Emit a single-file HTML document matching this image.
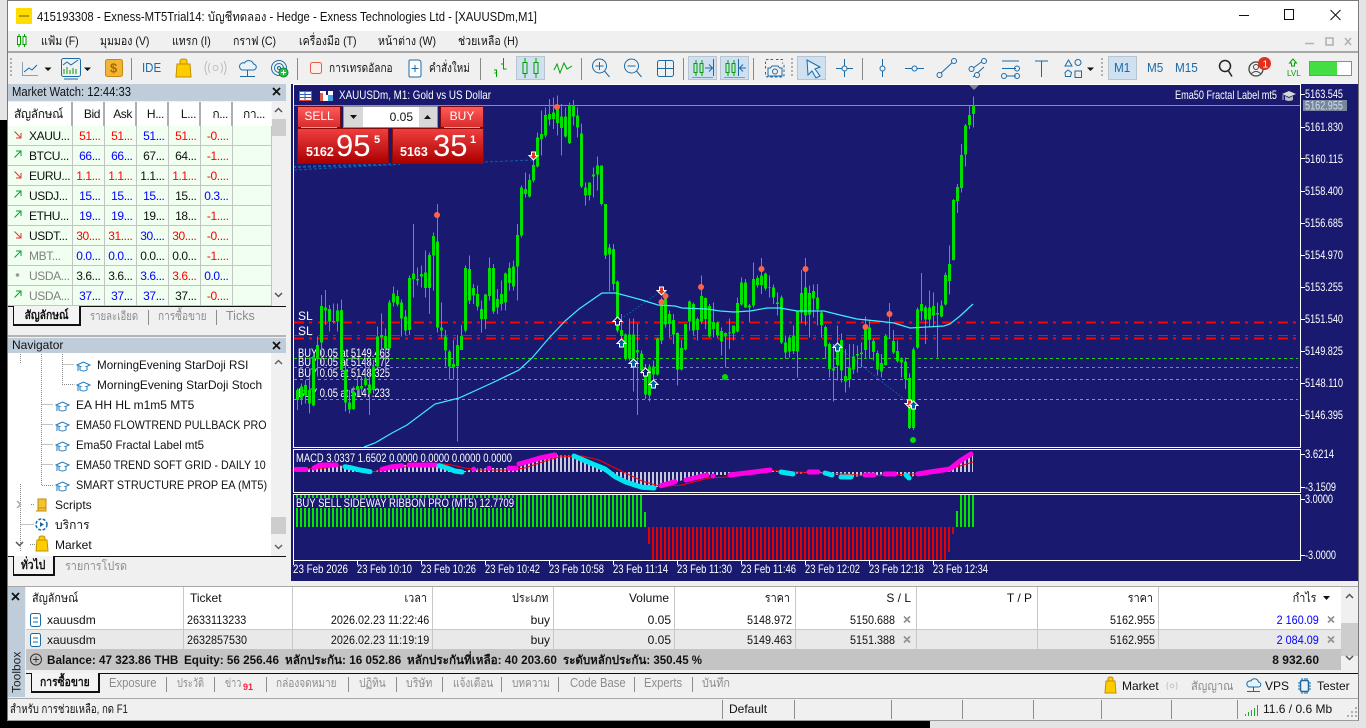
<!DOCTYPE html>
<html lang="th"><head><meta charset="utf-8"><title>XAUUSDm,M1</title>
<style>
html,body{margin:0;padding:0;width:1366px;height:728px;overflow:hidden;background:#e4e4e4}
body{position:relative;font:12px/16px "Liberation Sans","Noto Sans CJK SC","DejaVu Sans",sans-serif;color:#111}
.a,.t,svg.p{position:absolute}
.t{white-space:nowrap;line-height:16px;height:16px;transform-origin:0 0}
.g{color:#8c8c8c}.sb{font-weight:bold}
.x9{transform:scaleX(.9)}.x8{transform:scaleX(.84)}.x88{transform:scaleX(.88)}.x97{transform:scaleX(.975)}
.rr{transform:scaleX(.9);transform-origin:100% 0}
.v{position:absolute;width:1px;background:#c8c8c8}
.s{position:absolute;width:1px;background:#8c8c8c}
.hl{position:absolute;height:1px;background:#c8c8c8}
table.mw{position:absolute;left:8px;top:102px;border-collapse:collapse;table-layout:fixed;width:263px;background:#f0fff0}
table.mw td,table.mw th{border-right:1px solid #c4c4c4;border-bottom:1px solid #c4c4c4;padding:0 3px 0 0;text-align:right;height:19px;font-weight:normal;overflow:hidden;white-space:nowrap;font-size:12px;line-height:16px;letter-spacing:-.4px}
table.mw th{background:#fff;height:23px;border-bottom:1px solid #fff;border-right:2px solid #b0b0b0}
table.mw td.n{text-align:left;padding-left:21px;border-right:1px solid #c4c4c4}
.r{color:#f00}.b{color:#00f}.k{color:#111}.y{color:#808080!important}
.panel-r{background:linear-gradient(#ef3f3f,#ab0000);position:absolute;color:#fff}
.tab{position:absolute;background:#f4f4f4;border:2px solid #111;border-top:0;border-left-width:1px;box-sizing:border-box;text-align:center;font-weight:bold}
.tab span{display:inline-block;transform:scaleX(.86)}
</style></head><body>
<div class="a" style="left:0;top:120px;width:8px;height:608px;background:#000"></div>
<div class="a" style="left:0;top:720px;width:930px;height:8px;background:#000"></div>

<div class="a" style="left:7px;top:0;width:1352px;height:721px;background:#f0f0f0;box-sizing:border-box;border:1px solid #7a7a7a;border-bottom-color:#9a9a9a"></div>
<div class="a" style="left:8px;top:1px;width:1350px;height:30px;background:#fff"></div>
<div class="a" style="left:16px;top:8px;width:16px;height:16px;background:#ffdd00"></div>
<div class="a" style="left:19px;top:15px;width:10px;height:2px;background:#b09a10"></div>
<span class="t" style="left:37px;top:9px;font-size:12.500px;transform:scaleX(.906)">415193308 - Exness-MT5Trial14: บัญชีทดลอง - Hedge - Exness Technologies Ltd - [XAUUSDm,M1]</span>

<div class="a" style="left:8px;top:51px;width:1350px;height:2px;background:#a8a8a8"></div>
<span class="t x88" style="left:41px;top:33px">แฟ้ม (F)</span>
<span class="t x88" style="left:100px;top:33px">มุมมอง (V)</span>
<span class="t x88" style="left:172px;top:33px">แทรก (I)</span>
<span class="t x88" style="left:233px;top:33px">กราฟ (C)</span>
<span class="t x88" style="left:299px;top:33px">เครื่องมือ (T)</span>
<span class="t x88" style="left:378px;top:33px">หน้าต่าง (W)</span>
<span class="t x88" style="left:458px;top:33px">ช่วยเหลือ (H)</span>

<!-- selected toolbar backgrounds -->
<div class="a" style="left:516px;top:56px;width:29px;height:24px;background:#cfe0f0;border:1px solid #b8c4d0;box-sizing:border-box"></div>
<div class="a" style="left:688px;top:56px;width:29px;height:24px;background:#cfe0f0;border:1px solid #b8c4d0;box-sizing:border-box"></div>
<div class="a" style="left:720px;top:56px;width:29px;height:24px;background:#cfe0f0;border:1px solid #b8c4d0;box-sizing:border-box"></div>
<div class="a" style="left:797px;top:56px;width:29px;height:24px;background:#cfe0f0;border:1px solid #b8c4d0;box-sizing:border-box"></div>
<div class="a" style="left:1108px;top:56px;width:29px;height:24px;background:#cfe0f0;border:1px solid #b8c4d0;box-sizing:border-box"></div>

<span class="t" style="left:142px;top:60px;font-size:13px;color:#1a6aa8;transform:scaleX(.88)">IDE</span>
<span class="t" style="left:329px;top:60px;transform:scaleX(.84)">การเทรดอัลกอ</span>
<span class="t" style="left:429px;top:60px;transform:scaleX(.82)">คำสั่งใหม่</span>
<span class="t x9" style="left:1114px;top:60px;font-size:13px;color:#1a6aa8">M1</span>
<span class="t x9" style="left:1147px;top:60px;font-size:13px;color:#1a6aa8">M5</span>
<span class="t x9" style="left:1175px;top:60px;font-size:13px;color:#1a6aa8">M15</span>

<!-- toolbar icons -->
<svg class="p" style="left:0;top:0" width="1366" height="84" fill="none">
<g stroke="#00a000" stroke-width="1"><path d="M19 34v13M24.500 34v13"/><rect x="17.500" y="36.500" width="3" height="8" fill="#fff"/><rect x="23" y="36.500" width="3" height="8" fill="#fff"/></g>
<g stroke="#111"><path d="M1239 15.500h10"/><rect x="1284.500" y="9.500" width="9" height="10"/><path d="M1330.500 10l10 10M1340.500 10l-10 10"/></g>
<g stroke="#b0b0b0" stroke-width="1.500"><path d="M1305 43.500h9"/><rect x="1326" y="38" width="7" height="7"/><path d="M1345 38l6 7M1351 38l-6 7"/></g>
<g fill="#b0b0b0"><rect x="10" y="58" width="2" height="2"/><rect x="10" y="62" width="2" height="2"/><rect x="10" y="66" width="2" height="2"/><rect x="10" y="70" width="2" height="2"/><rect x="10" y="74" width="2" height="2"/><rect x="791" y="58" width="2" height="2"/><rect x="791" y="62" width="2" height="2"/><rect x="791" y="66" width="2" height="2"/><rect x="791" y="70" width="2" height="2"/><rect x="791" y="74" width="2" height="2"/><rect x="1101" y="58" width="2" height="2"/><rect x="1101" y="62" width="2" height="2"/><rect x="1101" y="66" width="2" height="2"/><rect x="1101" y="70" width="2" height="2"/><rect x="1101" y="74" width="2" height="2"/></g>
<g stroke="#8a8a8a"><path d="M131.500 58v22M297.500 58v22M480.500 58v22M581.500 58v22M683.500 58v22M753.500 58v22M862.500 58v22"/></g>
<path d="M22.500 62v13.500H38" stroke="#8aa0b4"/><path d="M24 72l5-4 3 2 5-5" stroke="#1a6aa8"/>
<path d="M44.500 67.500h7l-3.500 3.500zM84 67.500h7l-3.500 3.500zM1087 67.500h7l-3.500 3.500z" fill="#111"/>
<rect x="61.500" y="58.500" width="19" height="18" rx="2" stroke="#1a6aa8"/><path d="M63 65l4-3 4 3 7-5" stroke="#1a6aa8"/><path d="M64 74v-5M67 74v-7M70 74v-4M73 74v-6M76 74v-5" stroke="#00a000"/><path d="M64 79h14" stroke="#1a6aa8"/>
<rect x="105.500" y="59.500" width="17" height="17" rx="2" fill="#f2b431" stroke="#c68a12"/><text x="110" y="72.500" font-family="Liberation Sans" font-size="13" font-weight="bold" fill="#a86a00">$</text>
<path d="M177 64h13l1 13h-15zM180 64v-3q0-2 3.500-2t3.500 2v3" fill="#ffcc00" stroke="#c09000"/><path d="M180 61v3M187 61v3" stroke="#c09000"/>
<g stroke="#bdbdbd"><circle cx="215.500" cy="68" r="2.500"/><path d="M210 63q-3 5 0 10M221 63q3 5 0 10M207 61q-4 7 0 14M224 61q4 7 0 14"/></g>
<g stroke="#1a6aa8"><path d="M242 70h11a3 3 0 0 0 .5-6 5 5 0 0 0-9-1 3.500 3.500 0 0 0-2.500 7z" fill="#e8f2fa"/><path d="M247.500 70v6M240 76.500h15"/></g>
<g stroke="#1a6aa8"><circle cx="279" cy="68" r="7.500"/><circle cx="279" cy="68" r="4.500"/><circle cx="279" cy="68" r="1.500"/></g><circle cx="283.500" cy="72.500" r="4.500" fill="#2fbf4f" stroke="#0a8a2a"/><path d="M283.500 70v5M281 72.500h5" stroke="#fff"/>
<rect x="310.500" y="62.500" width="11" height="11" rx="2" fill="#fdeeea" stroke="#e2604a"/>
<path d="M410 60h8q3 0 3 3v12q0 2-2 2h-9q-1 0-1-1v-15q0-1 1-1z" stroke="#1a6aa8" fill="#fff"/><path d="M415 65v7M411.500 68.500h7" stroke="#1a6aa8"/>
<g stroke="#00a000"><path d="M494 70h2.500v7M494.500 73h2M503.500 58v11h3M501 64h2.500"/></g>
<g stroke="#00a000"><path d="M525 58v20M536 58v20"/><rect x="523" y="62.500" width="4" height="11" fill="#cfe0f0"/><rect x="534" y="62.500" width="4" height="11" fill="#cfe0f0"/></g>
<path d="M554 70l3-6 3 9 4-10 3 6 5-3" stroke="#00a000"/>
<g stroke="#1a6aa8"><circle cx="599.500" cy="66" r="7"/><path d="M604.500 71l5 6M599.500 62v8M595.500 66h8"/><circle cx="631.500" cy="66" r="7"/><path d="M636.500 71l5 6M627.500 66h8"/><rect x="657.500" y="60.500" width="16" height="16" rx="2"/><path d="M665.500 60v17M657 68.500h17"/></g>
<g stroke="#00a000"><path d="M696 60v16M702 60v16"/><rect x="694" y="63.500" width="3" height="9" fill="#cfe0f0"/><rect x="700" y="63.500" width="3" height="9" fill="#cfe0f0"/></g><path d="M713.500 59v17M705 68h7M709 64.500l3.500 3.500-3.500 3.500" stroke="#1a6aa8"/><path d="M692 77.500h21M724 77.500h21" stroke="#8a9aa8"/>
<g stroke="#00a000"><path d="M728 60v16M734 60v16"/><rect x="726" y="63.500" width="3" height="9" fill="#cfe0f0"/><rect x="732" y="63.500" width="3" height="9" fill="#cfe0f0"/></g><path d="M738.500 59v17M746 68h-6M743 64.500l-3.500 3.500 3.500 3.500" stroke="#1a6aa8"/>
<path d="M773 59.500h-6q-1.500 0-1.500 1.500v3M765.500 66v3M765.500 72v3q0 2 2 2h15q1.500 0 1.500-2v-10q0-2-2-2M776 59.500h7" stroke="#1a6aa8" stroke-dasharray="2.500 2"/><path d="M772 66h6l1.500 2h2.500v8h-14v-8h2.500z" stroke="#1a6aa8"/><circle cx="775" cy="71.500" r="2.500" stroke="#1a6aa8"/>
<path d="M807 60l13 7-5 2 5 7-4 2-4-7-4 4z" stroke="#1a6aa8" fill="#e4eff8"/>
<g stroke="#1a6aa8"><path d="M844.500 59v18M836 68.500h17"/><circle cx="844.500" cy="68.500" r="2.500" fill="#f0f0f0"/>
<path d="M882.500 59v18"/><circle cx="882.500" cy="68.500" r="2.500" fill="#f0f0f0"/>
<path d="M905 68.500h19"/><circle cx="914.500" cy="68.500" r="2.500" fill="#f0f0f0"/>
<path d="M939 75l16-15"/><circle cx="939.500" cy="75" r="2.500" fill="#f0f0f0"/><circle cx="954" cy="61" r="2.500" fill="#f0f0f0"/>
<path d="M972 69l12-9M973 77l11-10"/><circle cx="971.500" cy="69" r="2.500" fill="#f0f0f0"/><circle cx="984" cy="61" r="2.500" fill="#f0f0f0"/><circle cx="977" cy="75" r="2.500" fill="#f0f0f0"/>
<path d="M1002 61h17M1002 68.500h14M1002 76h14"/><circle cx="1017" cy="68.500" r="2.500"/><circle cx="1004" cy="76" r="2.500" fill="#f0f0f0"/><circle cx="1017" cy="76" r="2.500"/>
<path d="M1035 61h13M1041.500 61v16"/>
<path d="M1065 66l3.500-6 3.500 6zM1065 72.500l3-2.500 3.500 2.500-1 4h-5z"/><circle cx="1078" cy="62.500" r="3"/><rect x="1075" y="71" width="6.500" height="6.500"/></g>
<circle cx="1225" cy="66" r="5.500" stroke="#222" stroke-width="1.500"/><path d="M1228.500 71l3.500 5.500" stroke="#222" stroke-width="1.500"/>
<circle cx="1256" cy="69" r="7" stroke="#444" stroke-width="1.300"/><circle cx="1256" cy="67" r="2.500" stroke="#444"/><path d="M1251 74q5-5 10 0" stroke="#444"/>
<circle cx="1264.500" cy="63.500" r="6.500" fill="#e03020"/><text x="1262.500" y="67.500" font-size="10" font-family="Liberation Sans" fill="#fff">1</text>
<path d="M1293 59l3.500 4h-2v3h-3v-3h-2z" stroke="#00a000"/><text x="1287" y="76" font-size="8" font-family="Liberation Sans" fill="#00a000">LVL</text>
<rect x="1309.500" y="61.500" width="42" height="14" fill="#fff" stroke="#8a8a8a"/><rect x="1310" y="62" width="27" height="13" fill="#44dd44"/>
</svg>

<!-- CHART -->
<div class="a" style="left:291px;top:84px;width:1067px;height:497px;background:#191970"></div>
<svg class="p" style="left:0;top:0" width="1366" height="585" font-family="Liberation Sans" font-size="12" fill="#fff">
<defs>
<pattern id="hp" x="0" y="0" width="4" height="10" patternUnits="userSpaceOnUse"><rect width="2" height="10" fill="#c8c8d8"/></pattern>
<pattern id="gp" x="0" y="0" width="4" height="10" patternUnits="userSpaceOnUse"><rect width="2" height="10" fill="#00e600"/></pattern>
<pattern id="rp" x="0" y="0" width="4" height="10" patternUnits="userSpaceOnUse"><rect width="2" height="10" fill="#e80000"/></pattern>
</defs>
<path d="M293 105.500H1300" stroke="#8c8cac" shape-rendering="crispEdges"/>
<g stroke="#f00" shape-rendering="crispEdges" stroke-dasharray="10 5 3 6" fill="none"><path d="M294 322.500H1296" stroke-width="2"/><path d="M294 335.500H1296"/><path d="M294 338.500H1296" stroke-width="2"/></g>
<g stroke-dasharray="3 3" shape-rendering="crispEdges" fill="none"><path d="M294 358.500H1298" stroke="#22d022"/><path d="M294 367.500H1298" stroke="#33bb55"/><path d="M294 379.500H1298" stroke="#44c455"/><path d="M294 399.500H1298" stroke="#44c460"/></g>
<g><text x="298" y="320">SL</text><text x="298" y="335">SL</text>
<text x="298" y="357" textLength="92" lengthAdjust="spacingAndGlyphs">BUY 0.05 at 5149.463</text>
<text x="298" y="366" textLength="92" lengthAdjust="spacingAndGlyphs">BUY 0.05 at 5148.972</text>
<text x="298" y="377" textLength="92" lengthAdjust="spacingAndGlyphs">BUY 0.05 at 5148.325</text>
<text x="298" y="397" textLength="92" lengthAdjust="spacingAndGlyphs">BUY 0.05 at 5147.233</text></g>
<g fill="none" stroke="#0e5ea8" stroke-dasharray="3 2"><path d="M294 170L388 165"/><path d="M293 167L400 164" stroke-width="2"/><path d="M485 162L533 160"/></g>
<g fill="none" stroke="#1666b0" stroke-dasharray="1.500 2"><path d="M618 321L661 291"/><path d="M838 347L909 403"/></g>

<g transform="translate(292.500,84) scale(.33333)" fill="none" shape-rendering="crispEdges">
<path stroke="#00e000" stroke-width="3" d="M15 913V978M27 898V963M39 888V958M51 878V988M63 813V968M75 758V878M87 633V838M99 618V723M111 663V743M123 658V718M135 658V743M147 646V860M159 833V983M171 918V988M183 908V978M195 878V938M207 878V928M219 833V908M231 828V993M243 828V928M255 728V853M267 688V798M279 733V868M291 648V798M303 608V668M315 618V668M327 646V758M339 678V753M351 575V753M363 420V640M375 550V605M387 545V610M399 500V640M411 505V690M423 445V620M435 360V745M447 655V760M459 738V848M471 798V886M483 768V886M495 753V1073M507 723V798M519 545V745M531 515V660M543 600V660M555 605V680M567 650V745M579 630V735M591 520V650M603 540V690M615 615V690M627 590V680M639 565V680M651 535V620M663 530V620M675 420V650M687 305V460M699 265V340M711 270V340M723 225V295M735 145V250M747 80V215M759 70V160M771 45V125M783 40V135M795 35V155M807 60V215M819 70V160M831 55V180M843 48V125M855 70V160M867 118V312M879 295V365M891 295V350M903 250V340M915 218V320M927 245V365M939 360V525M951 480V622M963 480V620M975 590V745M987 690V780M999 748V830M1011 703V830M1023 703V923M1035 718V993M1047 800V870M1059 840V945M1071 840V952M1083 830V890M1095 760V875M1107 640V780M1119 625V730M1131 680V760M1143 690V780M1155 745V905M1167 768V860M1179 720V800M1191 650V740M1203 655V755M1215 700V770M1227 575V720M1239 640V735M1251 660V760M1263 655V760M1275 712V760M1287 730V815M1299 745V850M1311 703V795M1323 725V770M1335 640V745M1347 580V665M1359 585V672M1371 660V715M1383 535V670M1395 575V610M1407 522V630M1419 565V620M1431 575V640M1443 602V660M1455 625V695M1467 635V780M1479 755V825M1491 755V820M1503 725V810M1515 680V880M1527 558V715M1539 522V725M1551 605V760M1563 602V700M1575 600V725M1587 680V760M1599 725V825M1611 775V880M1623 780V952M1635 725V890M1647 748V895M1659 795V925M1671 780V910M1683 780V870M1695 785V865M1707 775V850M1719 697V825M1731 710V825M1743 765V830M1755 800V875M1767 810V880M1779 750V845M1791 657V765M1803 738V810M1815 770V835M1827 820V880M1839 820V915M1851 868V1035M1863 790V1038M1875 670V795M1887 567V710M1899 665V780M1911 620V730M1923 625V730M1935 655V820M1947 650V700M1959 565V665M1971 484V632M1983 345V530M1995 300V387M2007 180V325M2019 120V248M2031 65V135M2043 37V131"/>
<path stroke="#00e000" stroke-width="9" d="M15 918V948M27 908V943M39 903V933M51 918V958M63 818V965M75 783V823M87 666V776M99 670V680M111 675V713M123 711V714M135 680V713M147 678V858M159 858V956M171 955V976M183 923V975M195 906V918M207 906V913M219 883V903M231 901V928M243 848V918M255 758V848M267 753V760M279 756V793M291 655V793M303 628V655M315 636V662M327 655V703M339 698V740M351 582V738M363 568V585M375 585V590M387 570V577M399 565V612M411 513V612M423 456V515M435 472V730M447 730V740M459 758V800M471 803V848M483 840V850M495 783V846M507 756V798M519 552V740M531 555V650M543 612V635M555 630V668M567 675V705M579 632V705M591 552V636M603 552V682M615 645V670M627 630V660M639 568V656M651 552V597M663 548V608M675 453V548M687 310V455M699 315V330M711 288V338M723 243V290M735 160V248M747 150V165M759 93V155M771 90V107M783 85V105M795 62V117M807 97V132M819 97V157M831 65V177M843 65V98M855 95V130M867 148V308M879 310V335M891 295V333M903 272V278M915 245V272M927 245V360M939 360V515M951 490V512M963 495V600M975 592V740M987 738V756M999 751V823M1011 751V823M1023 751V823M1035 798V806M1047 808V860M1059 855V932M1071 847V935M1083 847V872M1095 763V872M1107 655V770M1119 635V722M1131 690V720M1143 708V752M1155 747V857M1167 792V857M1179 720V797M1191 652V713M1203 660V740M1215 705V738M1227 636V713M1239 642V705M1251 666V757M1263 714V735M1275 716V755M1287 741V773M1299 747V758M1311 745V748M1323 725V748M1335 657V743M1347 595V662M1359 595V670M1371 665V670M1383 585V665M1395 582V603M1407 575V603M1419 568V614M1431 610V612M1443 610V640M1455 655V660M1467 640V776M1479 775V806M1491 760V803M1503 754V801M1515 682V803M1527 627V686M1539 610V695M1551 627V692M1563 621V644M1575 640V676M1587 686V723M1599 729V788M1611 780V855M1623 854V860M1635 783V843M1647 768V860M1659 876V892M1671 851V886M1683 817V856M1695 810V815M1707 806V810M1719 732V798M1731 730V768M1743 771V804M1755 807V856M1767 837V862M1779 756V843M1791 762V764M1803 771V806M1815 801V831M1827 827V836M1839 832V885M1851 882V1032M1863 796V1032M1875 676V791M1887 660V681M1899 670V707M1911 670V707M1923 666V695M1935 687V692M1947 664V697M1959 573V662M1971 540V591M1983 348V528M1995 309V351M2007 213V312M2019 125V212M2031 93V123M2043 63V90"/>
<path stroke="#e8780a" stroke-width="3" d="M111 678V710M147 681V855M159 861V953M231 904V925M279 759V790M315 639V659M327 658V700M339 701V737M411 516V609M435 475V727M471 806V845M531 558V647M543 615V632M567 678V702M603 555V679M651 555V594M663 551V605M819 100V154M843 68V95M867 151V305M927 248V357M939 363V512M963 498V597M975 595V737M999 754V820M1047 811V857M1119 638V719M1143 711V749M1155 750V854M1203 663V737M1239 645V702M1275 719V752M1287 744V770M1359 598V667M1419 571V611M1443 613V637M1467 643V773M1479 778V803M1539 613V692M1563 624V641M1575 643V673M1587 689V720M1599 732V785M1611 783V852M1647 771V857M1731 733V765M1743 774V801M1803 774V803M1815 804V828M1851 885V1029M1899 673V704"/>
</g>

<polyline fill="none" stroke="#40ecfa" stroke-width="1.200" points="364,447 375,443 392,433 407,425 435,404 459,398 492,383 519,370 532,358 549,338 565,321 579,309 602,293 616,293 642,300 658,305 675,306 682,308 707,309 720,311 734,312 750,311 767,308 780,308 797,311 824,311 840,315 857,319 877,321 894,323 910,328 927,327 944,326 950,324 960,316 973,304"/>

<g fill="#ff6347"><circle cx="437" cy="215" r="3"/><circle cx="557" cy="107" r="3"/><circle cx="661.500" cy="302" r="3"/><circle cx="665.500" cy="296" r="3"/><circle cx="701" cy="287" r="3"/><circle cx="761.500" cy="269" r="3"/><circle cx="805.500" cy="269" r="3"/><circle cx="865.500" cy="327" r="3"/><circle cx="889.500" cy="314" r="3"/></g>
<g fill="#00e000"><circle cx="725" cy="377" r="3"/><circle cx="913" cy="440" r="3"/></g>
<g stroke="#fff" stroke-width="1" fill="#00609c">
<path d="M617.500 317l4.500 4.500h-2.500v3.500h-4v-3.500h-2.500z" fill="#191970"/>
<path d="M621.500 339l4.500 4.500h-2.500v3.500h-4v-3.500h-2.500z"/><path d="M633.500 359l4.500 4.500h-2.500v3.500h-4v-3.500h-2.500z"/><path d="M645.500 368l4.500 4.500h-2.500v3.500h-4v-3.500h-2.500z" fill="#191970"/><path d="M653.500 380l4.500 4.500h-2.500v3.500h-4v-3.500h-2.500z"/><path d="M837.500 343l4.500 4.500h-2.500v3.500h-4v-3.500h-2.500z"/>
<g fill="#e03418"><path d="M533.500 160l-4.500-4.500h2.500v-3.500h4v3.500h2.500z"/><path d="M661.500 295l-4.500-4.500h2.500v-3.500h4v3.500h2.500z"/><path d="M909.500 408l-4.500-4.500h2.500v-3.500h4v3.500h2.500z"/></g>
<path d="M913.500 401l4.500 4.500h-2.500v3.500h-4v-3.500h-2.500z"/></g>

<!-- MACD -->
<polygon fill="url(#hp)" shape-rendering="crispEdges" points="294,472 294,469 307,469 320,465 336,465 345,466 370,472 382,469 402,465 435,465 462,472 473,469 489,468 516,468 519,467 540,459 555,455 574,456 585,461 595,465 605,469 615,477 625,482 642,487 654,488 661,486 675,482 707,475 730,475 770,470 793,474 818,472 851,477 874,475 895,474 909,478 918,474 950,469 960,461 973,453 973,472"/>
<polyline fill="none" stroke="#f00" points="292,470 325,468 345,465 370,472 385,470 405,467 435,463 452,465 465,468 479,470 509,470 525,468 542,462 559,457 582,456 599,460 615,468 642,481 661,486.500 682,485 709,478 733,476.500 770,470.500 797,472 844,474 871,476 913,474 945,470.500 973,462"/>
<g fill="none" stroke-width="5" stroke-linecap="round" stroke-linejoin="round">
<g stroke="#ff00e6"><path d="M296 469.500H306M314 468L320 465H336M382 469.300L392 466.700L402 465.700M409 465H435M473.700 469.300h.1M489 468.300h.1M509 468.300H516M519 464L530 461L540 458L555 455M661 485.700L675 481.700M686 480L707 475M713 476h.1M730 475L770 470M809 472H818M865 475H874M885 474H895M918 474L930 472L950 469L960 461L971 454"/></g>
<g stroke="#00e5f2"><path d="M345 466.700L352 468L360 470L370 471.700M439 465.700L447 468L455 471L462 472M574 456L585 460.700L595 465L605 469L615 476.700L625 481.700L642 487.300L654 488M781 472L793 474M825 473L832 475M841 477L851 477M906 475L909 478"/></g></g>
<!-- Ribbon -->
<rect x="296" y="495" width="346" height="32" fill="url(#gp)" shape-rendering="crispEdges"/><rect x="644" y="512" width="2" height="15" fill="#00e600"/>
<rect x="648" y="527" width="2" height="17" fill="#e80000"/><rect x="652" y="527" width="294" height="33" fill="url(#rp)" shape-rendering="crispEdges"/><rect x="948" y="527" width="2" height="25" fill="#e80000"/><rect x="952" y="527" width="2" height="7" fill="#e80000"/>
<rect x="956" y="511" width="2" height="16" fill="#00e600"/><rect x="960" y="495" width="14" height="32" fill="url(#gp)" shape-rendering="crispEdges"/>
<rect x="296" y="498" width="218" height="10" fill="#191970"/>
<text x="296" y="507" textLength="218" lengthAdjust="spacingAndGlyphs">BUY SELL SIDEWAY RIBBON PRO (MT5) 12.7709</text>
<text x="296" y="462" textLength="216" lengthAdjust="spacingAndGlyphs">MACD 3.0337 1.6502 0.0000 0.0000 0.0000 0.0000</text>

<!-- frames -->
<g fill="none" stroke="#fff" shape-rendering="crispEdges"><rect x="293.500" y="84.500" width="1007" height="363"/><rect x="293.500" y="449.500" width="1007" height="43"/><rect x="293.500" y="494.500" width="1007" height="66"/>
<path d="M1301 94.500h4M1301 127.500h4M1301 158.500h4M1301 191.500h4M1301 223.500h4M1301 255.500h4M1301 287.500h4M1301 319.500h4M1301 351.500h4M1301 383.500h4M1301 415.500h4M1301 454.500h4M1301 487.500h4M1301 499.500h4M1301 555.500h4M293.500 561v4M357.500 561v4M421.500 561v4M485.500 561v4M549.500 561v4M613.500 561v4M677.500 561v4M741.500 561v4M805.500 561v4M869.500 561v4M933.500 561v4"/></g>
<path d="M969 85h10l-5 5z" fill="#808090"/>
<rect x="1303" y="100" width="44" height="11" fill="#78889a"/>
<text x="1305" y="98" textLength="38" lengthAdjust="spacingAndGlyphs">5163.545</text>
<text x="1305" y="109.500" textLength="38" lengthAdjust="spacingAndGlyphs" fill="#cfdcf4">5162.955</text>
<text x="1305" y="131" textLength="38" lengthAdjust="spacingAndGlyphs">5161.830</text>
<text x="1305" y="163" textLength="38" lengthAdjust="spacingAndGlyphs">5160.115</text>
<text x="1305" y="195" textLength="38" lengthAdjust="spacingAndGlyphs">5158.400</text>
<text x="1305" y="227" textLength="38" lengthAdjust="spacingAndGlyphs">5156.685</text>
<text x="1305" y="259" textLength="38" lengthAdjust="spacingAndGlyphs">5154.970</text>
<text x="1305" y="291" textLength="38" lengthAdjust="spacingAndGlyphs">5153.255</text>
<text x="1305" y="323" textLength="38" lengthAdjust="spacingAndGlyphs">5151.540</text>
<text x="1305" y="355" textLength="38" lengthAdjust="spacingAndGlyphs">5149.825</text>
<text x="1305" y="387" textLength="38" lengthAdjust="spacingAndGlyphs">5148.110</text>
<text x="1305" y="419" textLength="38" lengthAdjust="spacingAndGlyphs">5146.395</text>
<text x="1305" y="458" textLength="29" lengthAdjust="spacingAndGlyphs">3.6214</text>
<text x="1305" y="491" textLength="31" lengthAdjust="spacingAndGlyphs">-3.1509</text>
<text x="1305" y="503" textLength="28" lengthAdjust="spacingAndGlyphs">3.0000</text>
<text x="1305" y="559" textLength="31" lengthAdjust="spacingAndGlyphs">-3.0000</text>
<g><text x="293" y="573" textLength="55" lengthAdjust="spacingAndGlyphs">23 Feb 2026</text><text x="357" y="573" textLength="55" lengthAdjust="spacingAndGlyphs">23 Feb 10:10</text><text x="421" y="573" textLength="55" lengthAdjust="spacingAndGlyphs">23 Feb 10:26</text><text x="485" y="573" textLength="55" lengthAdjust="spacingAndGlyphs">23 Feb 10:42</text><text x="549" y="573" textLength="55" lengthAdjust="spacingAndGlyphs">23 Feb 10:58</text><text x="613" y="573" textLength="55" lengthAdjust="spacingAndGlyphs">23 Feb 11:14</text><text x="677" y="573" textLength="55" lengthAdjust="spacingAndGlyphs">23 Feb 11:30</text><text x="741" y="573" textLength="55" lengthAdjust="spacingAndGlyphs">23 Feb 11:46</text><text x="805" y="573" textLength="55" lengthAdjust="spacingAndGlyphs">23 Feb 12:02</text><text x="869" y="573" textLength="55" lengthAdjust="spacingAndGlyphs">23 Feb 12:18</text><text x="933" y="573" textLength="55" lengthAdjust="spacingAndGlyphs">23 Feb 12:34</text></g>
<!-- chart title -->
<rect x="299.500" y="91.500" width="12" height="9" fill="#fff" stroke="#e04030"/><path d="M300 94.500h11M300 97.500h11M305 92v8" stroke="#3060c0"/>
<path d="M320 91h6v4h2v-4h5v10h-13z" fill="#fff"/><rect x="320" y="93" width="3" height="8" fill="#e05a4a"/><rect x="328" y="95" width="5" height="6" fill="#48a0e0"/>
<text x="339" y="99" textLength="152" lengthAdjust="spacingAndGlyphs">XAUUSDm, M1:  Gold vs US Dollar</text>
<text x="1175" y="99" textLength="102" lengthAdjust="spacingAndGlyphs">Ema50 Fractal Label mt5</text>
<path d="M1282 94l7-3 7 3-7 3z" fill="#d8d8d8"/><path d="M1285 96v4q4 2 8 0v-4l-4 2z" fill="#bdbdbd"/><path d="M1283 95v5" stroke="#bdbdbd"/>
</svg>

<!-- trade panel -->
<div class="panel-r" style="left:297px;top:106px;width:44px;height:22px;border:1px solid #7a0808;box-sizing:border-box;background:linear-gradient(#ff5a5a,#d82c2c);text-align:center;line-height:19px;font-size:12px">SELL</div>
<div class="panel-r" style="left:440px;top:106px;width:44px;height:22px;border:1px solid #7a0808;box-sizing:border-box;background:linear-gradient(#ff5a5a,#d82c2c);text-align:center;line-height:19px;font-size:12px">BUY</div>
<div class="a" style="left:343px;top:106px;width:95px;height:22px;background:#d8d8d8;border:1px solid #8c8c9c;box-sizing:border-box"></div>
<div class="a" style="left:363px;top:107px;width:56px;height:20px;background:#fff;text-align:right;line-height:20px;padding-right:6px;box-sizing:border-box;color:#111">0.05</div>
<svg class="p" style="left:343px;top:106px" width="95" height="22"><path d="M7 9h7l-3.500 4z" fill="#111"/><path d="M81 13h7l-3.500-4z" fill="#111"/></svg>
<div class="panel-r" style="left:297px;top:128px;width:92px;height:36px;border:1px solid #8a0a0a;box-sizing:border-box"></div>
<div class="panel-r" style="left:392px;top:128px;width:92px;height:36px;border:1px solid #8a0a0a;box-sizing:border-box"></div>
<div class="a" style="left:301px;top:127px;width:36px;height:1px;background:#ff9a9a"></div>
<div class="a" style="left:444px;top:127px;width:36px;height:1px;background:#ff9a9a"></div>
<span class="t sb" style="left:306px;top:144px;color:#fff;font-size:12.500px">5162</span>
<span class="t" style="left:336px;top:130px;color:#fff;font-size:31px;line-height:32px;height:32px">95</span>
<span class="t sb" style="left:374px;top:132px;color:#fff;font-size:11px">5</span>
<span class="t sb" style="left:400px;top:144px;color:#fff;font-size:12.500px">5163</span>
<span class="t" style="left:433px;top:130px;color:#fff;font-size:31px;line-height:32px;height:32px">35</span>
<span class="t sb" style="left:470px;top:132px;color:#fff;font-size:11px">1</span>

<!-- MARKET WATCH -->
<div class="a" style="left:8px;top:84px;width:278px;height:17px;background:#bfcddb"></div>
<span class="t x9" style="left:12px;top:84px;font-size:12.500px">Market Watch: 12:44:33</span>
<svg class="p" style="left:272px;top:87px" width="10" height="10"><path d="M1 1l7 7M8 1l-7 7" stroke="#111" stroke-width="1.800"/></svg>
<div class="a" style="left:271px;top:101px;width:15px;height:205px;background:#f0f0f0"></div>
<div class="a" style="left:271px;top:119px;width:15px;height:17px;background:#cdcdcd"></div>
<svg class="p" style="left:272px;top:106px" width="13" height="196" fill="none" stroke="#555" stroke-width="1.500"><path d="M3 6l3.500-3.500 3.500 3.500M3 187l3.500 3.500 3.500-3.500"/></svg>
<table class="mw"><colgroup><col style="width:64px"><col style="width:32px"><col style="width:32px"><col style="width:32px"><col style="width:32px"><col style="width:32px"><col style="width:39px"></colgroup>
<tr><th style="text-align:left;padding-left:6px">สัญลักษณ์</th><th>Bid</th><th>Ask</th><th>H...</th><th>L...</th><th>ก...</th><th style="border-right:0;padding-right:6px">กา...</th></tr>
<tr><td class="n">XAUU...</td><td class="r">51...</td><td class="r">51...</td><td class="b">51...</td><td class="r">51...</td><td class="r">-0....</td><td></td></tr>
<tr><td class="n">BTCU...</td><td class="b">66...</td><td class="b">66...</td><td class="k">67...</td><td class="k">64...</td><td class="r">-1....</td><td></td></tr>
<tr><td class="n">EURU...</td><td class="r">1.1...</td><td class="r">1.1...</td><td class="k">1.1...</td><td class="r">1.1...</td><td class="r">-0....</td><td></td></tr>
<tr><td class="n">USDJ...</td><td class="b">15...</td><td class="b">15...</td><td class="b">15...</td><td class="k">15...</td><td class="b">0.3...</td><td></td></tr>
<tr><td class="n">ETHU...</td><td class="b">19...</td><td class="b">19...</td><td class="k">19...</td><td class="k">18...</td><td class="r">-1....</td><td></td></tr>
<tr><td class="n">USDT...</td><td class="r">30....</td><td class="r">31....</td><td class="b">30....</td><td class="r">30....</td><td class="r">-0....</td><td></td></tr>
<tr><td class="n y">MBT...</td><td class="b">0.0...</td><td class="b">0.0...</td><td class="k">0.0...</td><td class="k">0.0...</td><td class="r">-1....</td><td></td></tr>
<tr><td class="n y">USDA...</td><td class="k">3.6...</td><td class="k">3.6...</td><td class="b">3.6...</td><td class="r">3.6...</td><td class="b">0.0...</td><td></td></tr>
<tr><td class="n y">USDA...</td><td class="b">37...</td><td class="b">37...</td><td class="b">37...</td><td class="k">37...</td><td class="r">-0....</td><td></td></tr>
</table>
<svg class="p" style="left:0;top:0" width="30" height="310" fill="none" stroke-width="1">
<g stroke="#e83030"><path d="M14.500 131.500l6.500 6.500M21 133v5h-5M14.500 171.500l6.500 6.500M21 173v5h-5M14.500 231.500l6.500 6.500M21 233v5h-5"/></g>
<g stroke="#00a030"><path d="M14.500 157.500l6.500-6.500M16 151h5v5M14.500 217.500l6.500-6.500M16 211h5v5M14.500 197.500l6.500-6.500M16 191h5v5M14.500 257.500l6.500-6.500M16 251h5v5M14.500 297.500l6.500-6.500M16 291h5v5"/></g>
<circle cx="17.500" cy="275" r="1.800" fill="#999" stroke="none"/></svg>
<div class="a" style="left:8px;top:306px;width:278px;height:1px;background:#111"></div>
<div class="tab" style="left:13px;top:306px;width:68px;height:20px;line-height:19px"><span>สัญลักษณ์</span></div>
<span class="t g" style="left:90px;top:308px;transform:scaleX(.8)">รายละเอียด</span>
<span class="t g x8" style="left:158px;top:308px">การซื้อขาย</span>
<span class="t g" style="left:226px;top:308px;font-size:12.500px">Ticks</span>
<div class="s" style="left:148px;top:310px;height:15px"></div><div class="s" style="left:216px;top:310px;height:15px"></div>
<div class="a" style="left:8px;top:335px;width:278px;height:2px;background:#b4b4b4"></div>

<!-- NAVIGATOR -->
<div class="a" style="left:8px;top:338px;width:278px;height:15px;background:#bfcddb"></div>
<span class="t" style="left:12px;top:337px">Navigator</span>
<svg class="p" style="left:272px;top:341px" width="10" height="10"><path d="M1 1l7 7M8 1l-7 7" stroke="#111" stroke-width="1.800"/></svg>
<div class="a" style="left:8px;top:353px;width:263px;height:203px;background:#fff"></div>
<div class="a" style="left:271px;top:353px;width:15px;height:203px;background:#f0f0f0"></div>
<div class="a" style="left:271px;top:517px;width:15px;height:17px;background:#cdcdcd"></div>
<svg class="p" style="left:272px;top:358px" width="13" height="195" fill="none" stroke="#666" stroke-width="1.500"><path d="M3 6l3.500-3.500 3.500 3.500M3 187l3.500 3.500 3.500-3.500"/></svg>
<span class="t" style="left:97px;top:357px;transform:scaleX(.97)">MorningEvening StarDoji RSI</span>
<span class="t" style="left:97px;top:377px;transform:scaleX(.99)">MorningEvening StarDoji Stoch</span>
<span class="t" style="left:76px;top:397px">EA HH HL m1m5 MT5</span>
<span class="t" style="left:76px;top:417px;width:218px;overflow:hidden;transform:scaleX(.89)">EMA50 FLOWTREND PULLBACK PRO</span>
<span class="t" style="left:76px;top:437px;transform:scaleX(.955)">Ema50 Fractal Label mt5</span>
<span class="t" style="left:76px;top:457px;width:218px;overflow:hidden;transform:scaleX(.89)">EMA50 TREND SOFT GRID - DAILY 10</span>
<span class="t" style="left:76px;top:477px;transform:scaleX(.91)">SMART STRUCTURE PROP EA (MT5)</span>
<span class="t" style="left:55px;top:497px">Scripts</span>
<span class="t" style="left:55px;top:517px">บริการ</span>
<span class="t" style="left:55px;top:537px">Market</span>
<svg class="p" style="left:0;top:354px" width="100" height="202" fill="none">
<g stroke="#888" stroke-dasharray="1 1"><path d="M20.500 0v10M41.500 0v131.500h12M62.500 0v30.500h12M62.500 10.500h12M41.500 50.500h12M41.500 70.500h12M41.500 90.500h12M41.500 110.500h12M20.500 170.500h14M31 150.500h4M30 190.500h5M20.500 130v68"/></g>
<defs><g id="hat" stroke="#1a7ac0" fill="#fff"><path d="M0 0l6.500-3 6.500 3-6.500 3z"/><path d="M3 2v3q3.500 2 7 0v-3"/><path d="M1 1v5"/></g></defs>
<use href="#hat" x="77" y="11"/><use href="#hat" x="77" y="31"/><use href="#hat" x="56" y="51"/><use href="#hat" x="56" y="71"/><use href="#hat" x="56" y="91"/><use href="#hat" x="56" y="111"/><use href="#hat" x="56" y="131"/>
<path d="M17 147l3.500 3.500-3.500 3.500" stroke="#aaa" stroke-width="1.500"/>
<path d="M16 188l3.500 3.500 3.500-3.500" stroke="#555" stroke-width="1.500"/>
<path d="M38 145h8v9h-8zM36 157h10v-3h-8v3" fill="#f4c430" stroke="#c08a10"/>
<circle cx="41.500" cy="170.500" r="5.500" stroke="#1a6aa8" stroke-width="1.500" stroke-dasharray="3 1.500"/><path d="M40 168l4 2.500-4 2.500z" fill="#1a6aa8"/>
<path d="M37 186h10l1 11h-12zM39 186v-2q0-2 3-2t3 2v2" fill="#ffcc00" stroke="#c09000"/>
</svg>
<div class="a" style="left:8px;top:556px;width:278px;height:1px;background:#111"></div>
<div class="tab" style="left:13px;top:556px;width:42px;height:20px;line-height:19px"><span>ทั่วไป</span></div>
<span class="t g x9" style="left:65px;top:558px">รายการโปรด</span>

<!-- TOOLBOX -->
<div class="a" style="left:8px;top:586px;width:1350px;height:1px;background:#a8a8a8"></div>
<div class="a" style="left:8px;top:587px;width:17px;height:110px;background:#bfcddb"></div>
<svg class="p" style="left:11px;top:592px" width="10" height="10"><path d="M1 1l7 7M8 1l-7 7" stroke="#111" stroke-width="1.800"/></svg>
<svg class="p" style="left:8px;top:650px" width="17" height="46"><text transform="translate(12.500,43) rotate(-90)" font-family="Liberation Sans" font-size="12" fill="#222">Toolbox</text></svg>
<div class="a" style="left:26px;top:587px;width:1315px;height:42px;background:#fff"></div>
<div class="a" style="left:26px;top:629px;width:1315px;height:20px;background:#e9e9e9"></div>
<div class="hl" style="left:26px;top:629px;width:1315px"></div>
<div class="a" style="left:26px;top:649px;width:1315px;height:21px;background:#c4c4c4"></div>
<div class="v" style="left:183px;top:587px;height:62px"></div><div class="v" style="left:292px;top:587px;height:62px"></div><div class="v" style="left:432px;top:587px;height:62px"></div><div class="v" style="left:553px;top:587px;height:62px"></div><div class="v" style="left:674px;top:587px;height:62px"></div><div class="v" style="left:795px;top:587px;height:62px"></div><div class="v" style="left:916px;top:587px;height:62px"></div><div class="v" style="left:1037px;top:587px;height:62px"></div><div class="v" style="left:1158px;top:587px;height:62px"></div>
<span class="t x9" style="left:32px;top:590px">สัญลักษณ์</span><span class="t" style="left:190px;top:590px">Ticket</span>
<span class="t rr" style="right:939px;top:590px">เวลา</span><span class="t rr" style="right:818px;top:590px">ประเภท</span><span class="t" style="right:697px;top:590px">Volume</span><span class="t rr" style="right:576px;top:590px">ราคา</span><span class="t" style="right:455px;top:590px">S / L</span><span class="t" style="right:334px;top:590px">T / P</span><span class="t rr" style="right:213px;top:590px">ราคา</span><span class="t rr" style="right:50px;top:590px">กำไร</span>
<svg class="p" style="left:1322px;top:595px" width="10" height="6"><path d="M1 1h7l-3.500 4z" fill="#111"/></svg>

<span class="t" style="left:47px;top:612px">xauusdm</span><span class="t x9" style="left:187px;top:612px">2633113233</span><span class="t rr" style="right:937px;top:612px">2026.02.23 11:22:46</span><span class="t" style="right:816px;top:612px">buy</span><span class="t" style="right:695px;top:612px">0.05</span><span class="t rr" style="right:574px;top:612px">5148.972</span><span class="t rr" style="right:471px;top:612px">5150.688</span><span class="t rr" style="right:211px;top:612px">5162.955</span><span class="t rr" style="right:47px;top:612px;color:#00f">2 160.09</span>
<span class="t" style="left:47px;top:632px">xauusdm</span><span class="t x9" style="left:187px;top:632px">2632857530</span><span class="t rr" style="right:937px;top:632px">2026.02.23 11:19:19</span><span class="t" style="right:816px;top:632px">buy</span><span class="t" style="right:695px;top:632px">0.05</span><span class="t rr" style="right:574px;top:632px">5149.463</span><span class="t rr" style="right:471px;top:632px">5151.388</span><span class="t rr" style="right:211px;top:632px">5162.955</span><span class="t rr" style="right:47px;top:632px;color:#00f">2 084.09</span>
<span class="t sb x97" style="left:47px;top:652px">Balance: 47 323.86 THB</span>
<span class="t sb x97" style="left:184px;top:652px">Equity: 56 256.46</span>
<span class="t sb x97" style="left:285px;top:652px">หลักประกัน: 16 052.86</span>
<span class="t sb x97" style="left:407px;top:652px">หลักประกันที่เหลือ: 40 203.60</span>
<span class="t sb" style="left:563px;top:652px;transform:scaleX(.96)">ระดับหลักประกัน: 350.45 %</span>
<span class="t sb" style="right:47px;top:652px">8 932.60</span>
<svg class="p" style="left:0;top:600px" width="1366" height="75" fill="none">
<rect x="30.500" y="13.500" width="10" height="13" rx="2" stroke="#1a6aa8" fill="#fff"/><path d="M33 18h5M33 22h5" stroke="#1a6aa8"/>
<rect x="30.500" y="33.500" width="10" height="13" rx="2" stroke="#1a6aa8" fill="#fff"/><path d="M33 38h5M33 42h5" stroke="#1a6aa8"/>
<g stroke="#909090" stroke-width="1.700"><path d="M904 16.500l6 6M910 16.500l-6 6M904 36.500l6 6M910 36.500l-6 6M1328 16.500l6 6M1334 16.500l-6 6M1328 36.500l6 6M1334 36.500l-6 6"/></g>
<circle cx="36" cy="59.500" r="5.500" stroke="#333"/><path d="M33 59.500h6M36 56.500v6" stroke="#333"/>
</svg>
<div class="a" style="left:1341px;top:587px;width:17px;height:83px;background:#f0f0f0"></div>
<div class="a" style="left:1341px;top:623px;width:17px;height:33px;background:#cdcdcd"></div>
<svg class="p" style="left:1343px;top:592px" width="13" height="75" fill="none" stroke="#555" stroke-width="1.500"><path d="M3 6l3.500-3.500 3.500 3.500M3 64l3.500 3.500 3.500-3.500"/></svg>

<div class="a" style="left:26px;top:673px;width:1332px;height:1px;background:#111"></div>
<div class="tab" style="left:31px;top:673px;width:69px;height:20px;line-height:19px"><span>การซื้อขาย</span></div>
<span class="t g x9" style="left:109px;top:675px;font-size:12.500px">Exposure</span>
<span class="t g" style="left:177px;top:675px;transform:scaleX(.77)">ประวัติ</span>
<span class="t g" style="left:225px;top:675px;transform:scaleX(.75)">ข่าว</span><span class="t sb" style="left:243px;top:679px;font-size:9px;color:#f02040">91</span>
<span class="t g x8" style="left:276px;top:675px">กล่องจดหมาย</span>
<span class="t g x8" style="left:359px;top:675px">ปฏิทิน</span>
<span class="t g x88" style="left:406px;top:675px">บริษัท</span>
<span class="t g x8" style="left:453px;top:675px">แจ้งเตือน</span>
<span class="t g x8" style="left:512px;top:675px">บทความ</span>
<span class="t g x9" style="left:570px;top:675px;font-size:12.500px">Code Base</span>
<span class="t g x9" style="left:644px;top:675px;font-size:12.500px">Experts</span>
<span class="t g x9" style="left:702px;top:675px">บันทึก</span>
<div class="s" style="left:166px;top:677px;height:15px"></div><div class="s" style="left:214px;top:677px;height:15px"></div><div class="s" style="left:266px;top:677px;height:15px"></div><div class="s" style="left:348px;top:677px;height:15px"></div><div class="s" style="left:396px;top:677px;height:15px"></div><div class="s" style="left:442px;top:677px;height:15px"></div><div class="s" style="left:501px;top:677px;height:15px"></div><div class="s" style="left:558px;top:677px;height:15px"></div><div class="s" style="left:634px;top:677px;height:15px"></div><div class="s" style="left:692px;top:677px;height:15px"></div>
<span class="t" style="left:1122px;top:678px">Market</span>
<span class="t g" style="left:1191px;top:678px;transform:scaleX(.93)">สัญญาณ</span>
<span class="t" style="left:1265px;top:678px">VPS</span>
<span class="t" style="left:1317px;top:678px">Tester</span>
<svg class="p" style="left:1100px;top:676px" width="220" height="20" fill="none">
<path d="M6 5h9l1 12H5zM8 5V3q0-2 2.500-2T13 3v2" fill="#ffcc00" stroke="#c09000"/>
<g stroke="#c4c4c4"><circle cx="72" cy="10" r="1.800"/><path d="M68 6q-2 4 0 8M76 6q2 4 0 8"/></g>
<g stroke="#1a6aa8"><path d="M149 11h9a2.500 2.500 0 0 0 .5-5 4 4 0 0 0-7.500-1 3 3 0 0 0-2 6z" fill="#e8f2fa"/><path d="M153.500 11v4M147 15.500h13"/></g>
<rect x="200.500" y="4.500" width="8" height="11" rx="1.500" stroke="#1a6aa8" stroke-width="1.500"/><path d="M202 2v2M205 2v2M207 2v2M202 16v2M205 16v2M207 16v2M198 7h2M198 10h2M198 13h2M209 7h2M209 10h2M209 13h2" stroke="#1a6aa8"/>
</svg>
<div class="a" style="left:8px;top:698px;width:1350px;height:1px;background:#a8a8a8"></div>
<span class="t" style="left:10px;top:701px;transform:scaleX(.8)">สำหรับ การช่วยเหลือ, กด F1</span>
<span class="t" style="left:729px;top:701px">Default</span>
<span class="t" style="left:1263px;top:701px">11.6 / 0.6 Mb</span>
<div class="s" style="left:722px;top:700px;height:19px"></div><div class="s" style="left:794px;top:700px;height:19px"></div><div class="s" style="left:891px;top:700px;height:19px"></div><div class="s" style="left:962px;top:700px;height:19px"></div><div class="s" style="left:1033px;top:700px;height:19px"></div><div class="s" style="left:1101px;top:700px;height:19px"></div><div class="s" style="left:1171px;top:700px;height:19px"></div><div class="s" style="left:1237px;top:700px;height:19px"></div>
<svg class="p" style="left:1243px;top:701px" width="116" height="19" fill="none" stroke="#30a030"><path d="M2.500 15v-2M5.500 15v-4M8.500 15v-6M11.500 15v-8M14.500 15V4"/><g fill="#b0b0b0" stroke="none"><rect x="112" y="14" width="2" height="2"/><rect x="108" y="14" width="2" height="2"/><rect x="104" y="14" width="2" height="2"/><rect x="112" y="10" width="2" height="2"/><rect x="108" y="10" width="2" height="2"/><rect x="112" y="6" width="2" height="2"/></g></svg>
</body></html>
